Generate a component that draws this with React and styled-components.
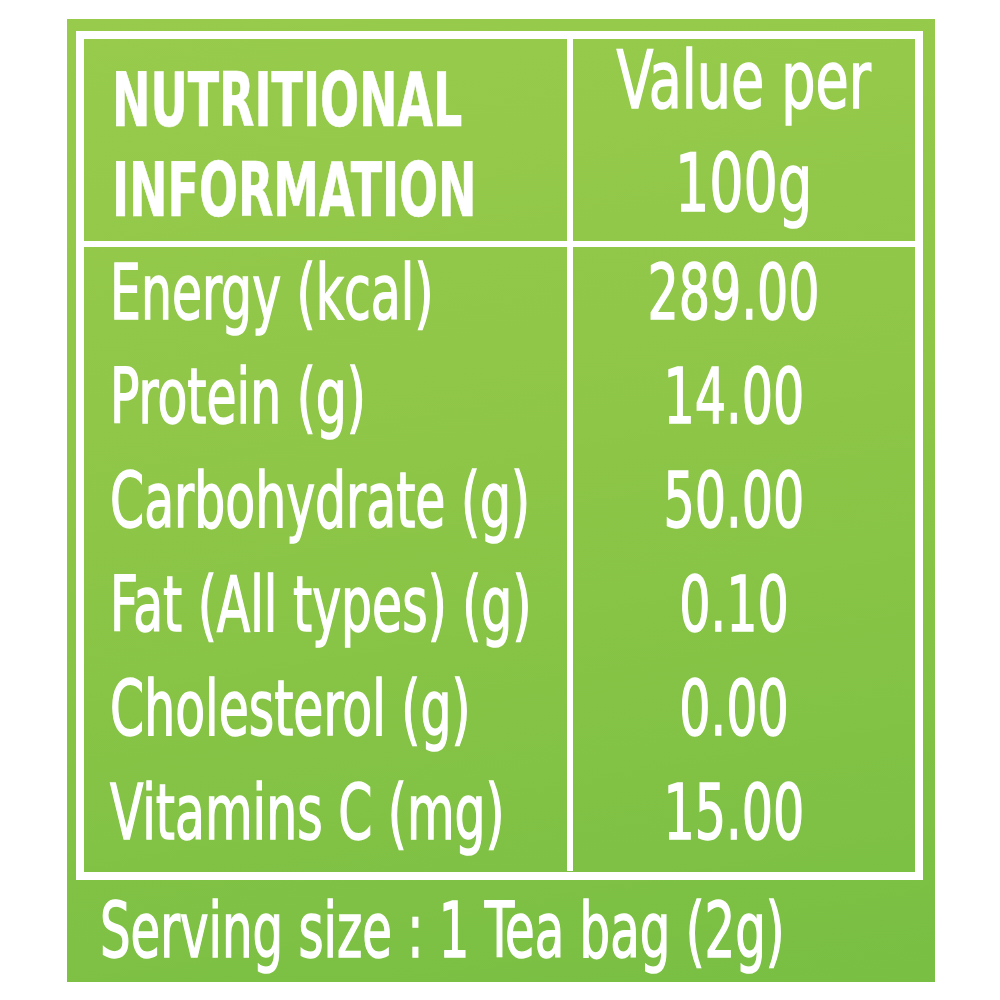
import React from "react";
import styled, { createGlobalStyle } from "styled-components";

const Global = createGlobalStyle`
  html, body { margin: 0; padding: 0; background: #ffffff; }
  body { font-family: "DejaVu Sans Condensed", "DejaVu Sans", "Liberation Sans", sans-serif; }
`;

const FONT = `"DejaVu Sans Condensed", "DejaVu Sans", "Liberation Sans", sans-serif`;

const Page = styled.div`
  width: 1000px;
  height: 1000px;
  padding: 19px 0 0 67px;
  box-sizing: border-box;
`;

const Panel = styled.section`
  width: 868px;
  height: 963px;
  box-sizing: border-box;
  padding: 12px 12px 0 9px;
  display: flex;
  flex-direction: column;
  background: linear-gradient(170deg, #98cb4c 0%, #8ec647 45%, #78bf43 100%);
  color: #ffffff;
  font-family: ${FONT};
`;

const Table = styled.div`
  height: 849px;
  box-sizing: border-box;
  border: 8px solid #ffffff;
  display: grid;
  grid-template-columns: 489px 1fr;
  grid-template-rows: 208px repeat(6, 104px);
`;

const Cell = styled.div`
  box-sizing: border-box;
  border-right: ${(p) => (p.$left ? "6px solid #ffffff" : "none")};
  border-bottom: ${(p) => (p.$head ? "6px solid #ffffff" : "none")};
  display: flex;
  flex-direction: column;
  align-items: ${(p) => (p.$left ? "flex-start" : "center")};
  padding-left: ${(p) => (p.$left ? "26px" : "0")};
  padding-right: ${(p) => (p.$left || p.$head ? "0" : "20px")};
`;

const Text = styled.span`
  display: inline-block;
  white-space: nowrap;
  font-size: ${(p) => p.$size || 76}px;
  font-weight: ${(p) => (p.$bold ? 700 : 400)};
  line-height: ${(p) => p.$lh || 92}px;
  -webkit-text-stroke: ${(p) => (p.$bold ? "0.6px" : "1.4px")} #ffffff;
  transform: scaleX(${(p) => p.$sx || 0.71});
  transform-origin: ${(p) => (p.$center ? "center" : "left")} center;
`;

const HeadLeft = styled.div`
  padding-top: 16px;
  padding-left: 2px;
  display: flex;
  flex-direction: column;
`;

const HeadRight = styled.div`
  margin-top: -10px;
  display: flex;
  flex-direction: column;
  align-items: center;
`;

const Footer = styled.div`
  flex: 1;
  padding-left: 24px;
  display: flex;
  align-items: flex-start;
`;

const rows = [
  ["Energy (kcal)", "289.00"],
  ["Protein (g)", "14.00"],
  ["Carbohydrate (g)", "50.00"],
  ["Fat (All types) (g)", "0.10"],
  ["Cholesterol (g)", "0.00"],
  ["Vitamins C (mg)", "15.00"],
];

export default function App() {
  return (
    <Page>
      <Global />
      <Panel>
        <Table>
          <Cell $left $head>
            <HeadLeft>
              <Text $bold $size={74} $lh={90} $sx={0.69}>NUTRITIONAL</Text>
              <Text $bold $size={74} $lh={90} $sx={0.69}>INFORMATION</Text>
            </HeadLeft>
          </Cell>
          <Cell $head>
            <HeadRight>
              <Text $center $size={80} $lh={103} $sx={0.75}>Value per</Text>
              <Text $center $size={80} $lh={103} $sx={0.75}>100g</Text>
            </HeadRight>
          </Cell>
          {rows.map(([label, value]) => (
            <React.Fragment key={label}>
              <Cell $left>
                <Text $sx={0.715}>{label}</Text>
              </Cell>
              <Cell>
                <Text $center $sx={0.72}>{value}</Text>
              </Cell>
            </React.Fragment>
          ))}
        </Table>
        <Footer>
          <Text $lh={102} $sx={0.705}>Serving size : 1 Tea bag (2g)</Text>
        </Footer>
      </Panel>
    </Page>
  );
}
